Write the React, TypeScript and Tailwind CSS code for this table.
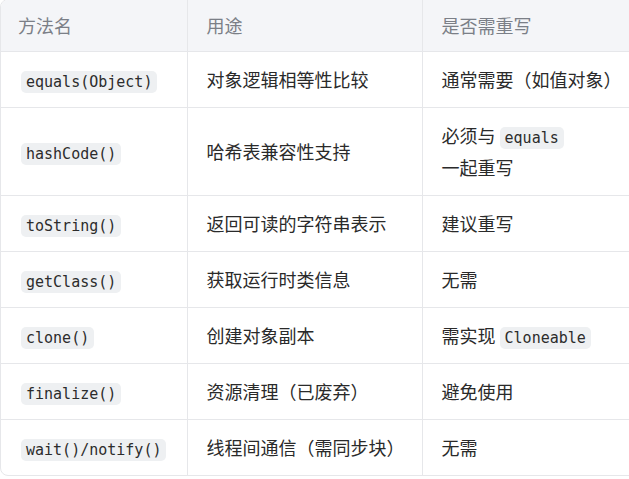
function Code({ children }: { children: React.ReactNode }) {
  return (
    <code className="rounded-[5px] bg-[#eef0f2] px-[5px] py-[2px] font-['DejaVu_Sans_Mono','Liberation_Mono',monospace] text-[15px] leading-none text-[#2c2c2c]">
      {children}
    </code>
  );
}

const data: { name: string; use: string; need: React.ReactNode; tall?: boolean }[] = [
  { name: 'equals(Object)', use: '对象逻辑相等性比较', need: '通常需要（如值对象）' },
  {
    name: 'hashCode()',
    use: '哈希表兼容性支持',
    tall: true,
    need: (
      <>
        必须与 <Code>equals</Code>
        <br />
        一起重写
      </>
    ),
  },
  { name: 'toString()', use: '返回可读的字符串表示', need: '建议重写' },
  { name: 'getClass()', use: '获取运行时类信息', need: '无需' },
  {
    name: 'clone()',
    use: '创建对象副本',
    need: (
      <>
        需实现 <Code>Cloneable</Code>
      </>
    ),
  },
  { name: 'finalize()', use: '资源清理（已废弃）', need: '避免使用' },
  { name: 'wait()/notify()', use: '线程间通信（需同步块）', need: '无需' },
];

export default function App() {
  return (
    <div className="h-[479px] w-[629px] overflow-hidden bg-white font-['Noto_Sans_CJK_SC','Noto_Sans',sans-serif]">
      <div className="-mt-px w-[680px] overflow-hidden rounded-lg border border-[#e6e7ea]">
        <table className="w-full border-collapse text-left text-[18px]">
          <thead>
            <tr className="bg-[#f4f5f8] text-[#7b7f87]">
              <th className="w-[186px] border-b border-r border-[#e6e7ea] px-[17px] py-3 font-normal leading-[27px]">方法名</th>
              <th className="w-[235px] border-b border-r border-[#e6e7ea] px-[19px] py-3 font-normal leading-[27px]">用途</th>
              <th className="border-b border-[#e6e7ea] px-[19px] py-3 font-normal leading-[27px]">是否需重写</th>
            </tr>
          </thead>
          <tbody className="text-[#2a2a2a]">
            {data.map((r, i) => (
              <tr key={r.name}>
                <td className={`border-r border-[#e6e7ea] px-5 py-3 leading-[31px] ${i < data.length - 1 ? 'border-b' : ''}`}>
                  <Code>{r.name}</Code>
                </td>
                <td className={`border-r border-[#e6e7ea] px-[19px] py-3 leading-[31px] ${i < data.length - 1 ? 'border-b' : ''}`}>
                  {r.use}
                </td>
                <td className={`border-[#e6e7ea] px-[19px] py-3 ${r.tall ? 'leading-[31.5px]' : 'leading-[31px]'} ${i < data.length - 1 ? 'border-b' : ''}`}>
                  {r.need}
                </td>
              </tr>
            ))}
          </tbody>
        </table>
      </div>
    </div>
  );
}
